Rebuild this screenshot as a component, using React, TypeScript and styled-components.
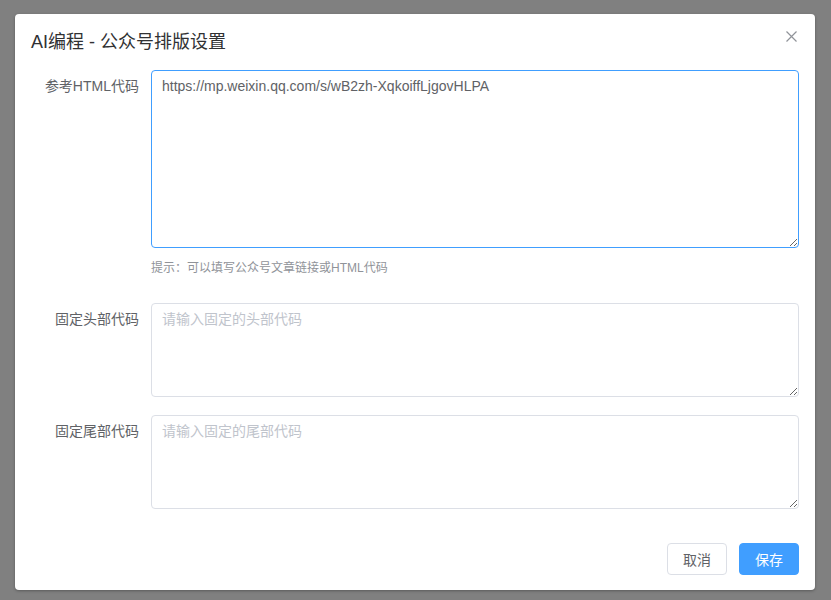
import styled, { createGlobalStyle } from 'styled-components'
import { ReactElement } from 'react'

const GlobalStyle = createGlobalStyle`
  html, body {
    margin: 0;
    padding: 0;
    background: #808080;
    font-family: 'Liberation Sans', 'Noto Sans CJK SC', sans-serif;
  }
`

const Overlay = styled.div`
  width: 831px;
  height: 600px;
  background: #808080;
  display: flex;
  align-items: flex-start;
  padding: 14px 0 0 15px;
  box-sizing: border-box;
  overflow: hidden;
`

const Dialog = styled.div`
  position: relative;
  width: 800px;
  height: 576px;
  background: #fff;
  border-radius: 4px;
  box-shadow: 0 1px 3px rgba(0, 0, 0, 0.3);
  box-sizing: border-box;
  display: flex;
  flex-direction: column;
`

const Header = styled.div`
  padding: 16px 16px 0 16px;
`

const Title = styled.span`
  font-size: 18px;
  line-height: 24px;
  color: #303133;
`

const Close = styled.button`
  position: absolute;
  top: 16px;
  right: 18px;
  width: 12px;
  height: 12px;
  padding: 0;
  border: none;
  background: none;
  cursor: pointer;
  display: flex;
  align-items: center;
  justify-content: center;
`

const Body = styled.div`
  padding: 16px 16px 0 16px;
  display: flex;
  flex-direction: column;
`

const FormItem = styled.div<{ gap: number }>`
  display: flex;
  margin-bottom: ${({ gap }) => gap}px;
`

const Label = styled.label`
  width: 120px;
  flex: none;
  box-sizing: border-box;
  padding-right: 12px;
  text-align: right;
  font-size: 14px;
  line-height: 32px;
  color: #606266;
`

const Field = styled.div`
  flex: 1;
  display: flex;
  flex-direction: column;
`

const TextArea = styled.textarea<{ h: number; focused?: boolean }>`
  display: block;
  width: 100%;
  height: ${({ h }) => h}px;
  box-sizing: border-box;
  padding: 5px 10px;
  font-family: 'Liberation Sans', 'Noto Sans CJK SC', sans-serif;
  font-size: 14px;
  line-height: 21px;
  color: #606266;
  border: 1px solid ${({ focused }) => (focused ? '#409eff' : '#dcdfe6')};
  border-radius: 4px;
  resize: vertical;
  outline: none;
  background: #fff;
  &::placeholder {
    color: #c0c4cc;
  }
`

const Hint = styled.div`
  margin-top: 11px;
  font-size: 12px;
  line-height: 18px;
  color: #909399;
`

const Footer = styled.div`
  margin-top: auto;
  padding: 0 16px 15px;
  display: flex;
  justify-content: flex-end;
  gap: 12px;
`

const Button = styled.button<{ primary?: boolean }>`
  width: 60px;
  height: 32px;
  box-sizing: border-box;
  border-radius: 4px;
  font-family: 'Liberation Sans', 'Noto Sans CJK SC', sans-serif;
  font-size: 14px;
  cursor: pointer;
  border: 1px solid ${({ primary }) => (primary ? '#409eff' : '#dcdfe6')};
  background: ${({ primary }) => (primary ? '#409eff' : '#fff')};
  color: ${({ primary }) => (primary ? '#fff' : '#606266')};
`

export default function App(): ReactElement {
  return (
    <Overlay>
      <GlobalStyle />
      <Dialog>
        <Header>
          <Title>AI编程 - 公众号排版设置</Title>
        </Header>
        <Close aria-label="close">
          <svg width="11" height="11" viewBox="0 0 11 11">
            <path d="M0.5 0.5 L10.5 10.5 M10.5 0.5 L0.5 10.5" stroke="#909399" strokeWidth="1.2" />
          </svg>
        </Close>
        <Body>
          <FormItem gap={26}>
            <Label>参考HTML代码</Label>
            <Field>
              <TextArea
                h={178}
                focused
                defaultValue="https://mp.weixin.qq.com/s/wB2zh-XqkoiffLjgovHLPA"
              />
              <Hint>提示：可以填写公众号文章链接或HTML代码</Hint>
            </Field>
          </FormItem>
          <FormItem gap={18}>
            <Label>固定头部代码</Label>
            <Field>
              <TextArea h={94} placeholder="请输入固定的头部代码" />
            </Field>
          </FormItem>
          <FormItem gap={0}>
            <Label>固定尾部代码</Label>
            <Field>
              <TextArea h={94} placeholder="请输入固定的尾部代码" />
            </Field>
          </FormItem>
        </Body>
        <Footer>
          <Button>取消</Button>
          <Button primary>保存</Button>
        </Footer>
      </Dialog>
    </Overlay>
  )
}
